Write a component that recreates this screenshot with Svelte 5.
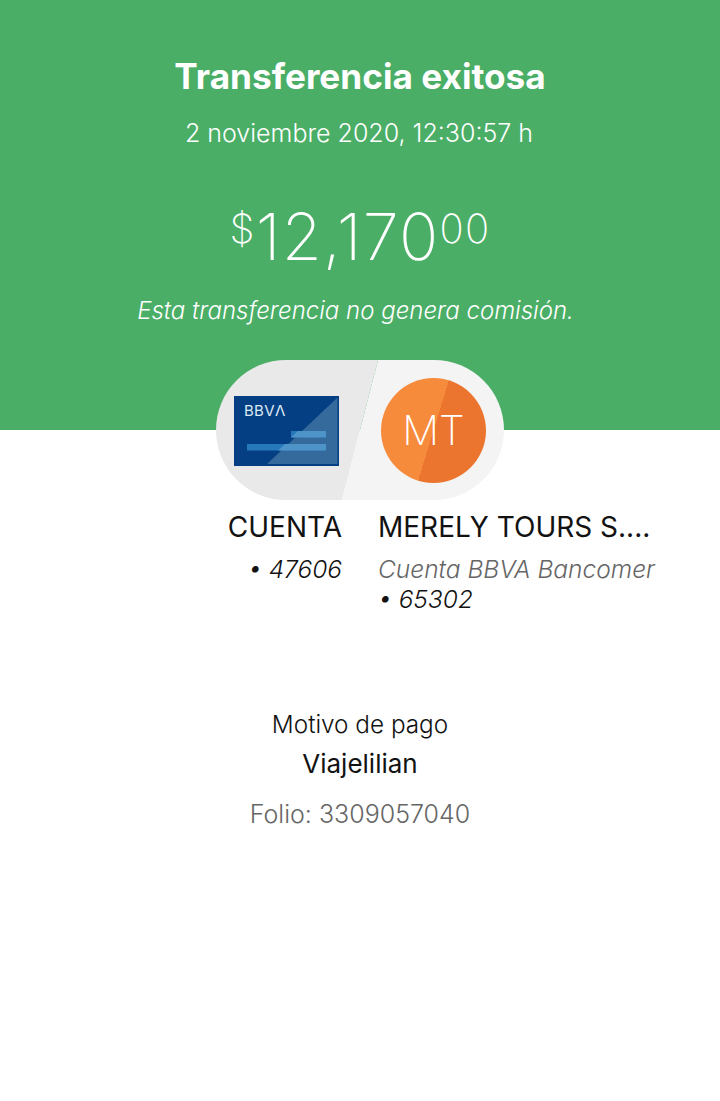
<script>
  const title = 'Transferencia exitosa';
</script>

<main class="page">
  <header class="hero">
    <h1>{title}</h1>
    <p class="date">2 noviembre 2020, 12:30:57 h</p>
    <p class="amount"><sup class="cur">$</sup>12,170<sup class="cents">00</sup></p>
    <p class="note">Esta transferencia no genera comisión.</p>
  </header>

  <div class="pill">
    <svg class="split" viewBox="0 0 288 140" width="288" height="140" aria-hidden="true">
      <polygon points="0,0 162,0 126,140 0,140" fill="#e9e9e9" />
      <polygon points="162,0 288,0 288,140 126,140" fill="#f4f4f4" />
    </svg>
    <div class="card">
      <svg viewBox="0 0 105 70" width="105" height="70" aria-hidden="true">
        <rect width="105" height="70" fill="#043f83" />
        <polygon points="33,68 103,2 103.5,2 103.5,68" fill="#346a9c" />
        <rect x="57" y="35" width="35" height="6.5" fill="#2777bb" />
        <rect x="13" y="48" width="79" height="6.5" fill="#2777bb" />
        <polygon points="57,41.5 64,35 92,35 92,41.5" fill="#4f94c9" />
        <polygon points="44,54.5 51,48 92,48 92,54.5" fill="#4f94c9" />
      </svg>
      <span class="logo">BBVΛ</span>
    </div>
    <div class="avatar">
      <span>MT</span>
    </div>
  </div>

  <section class="parties">
    <div class="party from">
      <div class="name">CUENTA</div>
      <div class="acct">• 47606</div>
    </div>
    <div class="party to">
      <div class="name">MERELY TOURS S....</div>
      <div class="bank">Cuenta BBVA Bancomer</div>
      <div class="acct">• 65302</div>
    </div>
  </section>

  <section class="details">
    <div class="label">Motivo de pago</div>
    <div class="value">Viajelilian</div>
    <div class="folio">Folio: 3309057040</div>
  </section>
</main>

<style>
  :global(body) {
    margin: 0;
    background: #fff;
  }
  .page {
    width: 720px;
    height: 1101px;
    overflow: hidden;
    font-family: "Inter", "Liberation Sans", sans-serif;
    font-weight: 300;
    color: #121212;
  }
  .hero {
    height: 430px;
    box-sizing: border-box;
    background: #4aae66;
    color: #fff;
    text-align: center;
    padding-top: 55px;
  }
  h1 {
    margin: 0;
    font-size: 35.2px;
    line-height: 42px;
    font-weight: 700;
  }
  .date {
    margin: 21px 0 0;
    padding-right: 2px;
    font-size: 25px;
    line-height: 30px;
  }
  .amount {
    margin: 49px 0 0;
    font-size: 65px;
    line-height: 80px;
    font-weight: 200;
    letter-spacing: 1.3px;
    white-space: nowrap;
  }
  sup {
    font-size: 40px;
    line-height: 0;
    vertical-align: 17px;
  }
  .note {
    margin: 19px 0 0;
    padding-right: 9px;
    font-size: 24px;
    line-height: 30px;
    font-style: italic;
  }
  .pill {
    position: relative;
    width: 288px;
    height: 140px;
    margin: -70px auto 0;
    border-radius: 70px;
    overflow: hidden;
    display: flex;
    align-items: center;
    box-sizing: border-box;
    padding-left: 18px;
    gap: 42px;
  }
  .split {
    position: absolute;
    inset: 0;
  }
  .card {
    position: relative;
    width: 105px;
    height: 70px;
    flex: none;
    margin-top: 2px;
  }
  .card svg {
    display: block;
  }
  .logo {
    position: absolute;
    left: 10px;
    top: 6px;
    font-size: 15px;
    line-height: 18px;
    font-weight: 400;
    color: #dfe9f3;
    letter-spacing: 0.3px;
  }
  .avatar {
    position: relative;
    width: 105px;
    height: 105px;
    flex: none;
    border-radius: 50%;
    background: linear-gradient(107deg, #f78b3c 0 50%, #eb752e 50% 100%);
    color: #fff;
    display: flex;
    align-items: center;
    justify-content: center;
    font-size: 41px;
    font-weight: 200;
  }
  .parties {
    display: grid;
    grid-template-columns: 342px 1fr;
    column-gap: 36px;
    margin-top: 10px;
  }
  .name {
    font-size: 28px;
    line-height: 34px;
    font-weight: 400;
    white-space: nowrap;
  }
  .from {
    text-align: right;
  }
  .acct, .bank {
    font-size: 24.5px;
    line-height: 30px;
    font-style: italic;
    white-space: nowrap;
  }
  .from .acct, .bank {
    margin-top: 10px;
  }
  .bank {
    color: #666;
  }
  .details {
    text-align: center;
    margin-top: 95px;
  }
  .label {
    font-size: 24.3px;
    line-height: 30px;
  }
  .value {
    margin-top: 10px;
    font-size: 26px;
    line-height: 30px;
    font-weight: 400;
  }
  .folio {
    margin-top: 20px;
    font-size: 25px;
    line-height: 30px;
    color: #666;
  }
</style>
